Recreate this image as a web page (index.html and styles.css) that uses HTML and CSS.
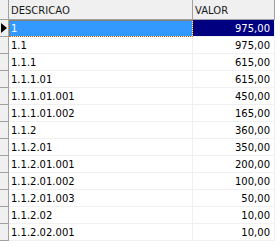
FILE: index.html
```html
<!DOCTYPE html>
<html>
<head>
<meta charset="utf-8">
<link rel="stylesheet" href="styles.css">
</head>
<body>
<div class="grid">
  <div class="row head">
    <div class="ind"></div>
    <div class="desc">DESCRICAO</div>
    <div class="val">VALOR</div>
  </div>
  <div class="row sel">
    <div class="ind"><span class="arrow"></span></div>
    <div class="desc">1</div>
    <div class="val">975,00</div>
  </div>
  <div class="row"><div class="ind"></div><div class="desc">1.1</div><div class="val">975,00</div></div>
  <div class="row"><div class="ind"></div><div class="desc">1.1.1</div><div class="val">615,00</div></div>
  <div class="row"><div class="ind"></div><div class="desc">1.1.1.01</div><div class="val">615,00</div></div>
  <div class="row"><div class="ind"></div><div class="desc">1.1.1.01.001</div><div class="val">450,00</div></div>
  <div class="row"><div class="ind"></div><div class="desc">1.1.1.01.002</div><div class="val">165,00</div></div>
  <div class="row"><div class="ind"></div><div class="desc">1.1.2</div><div class="val">360,00</div></div>
  <div class="row"><div class="ind"></div><div class="desc">1.1.2.01</div><div class="val">350,00</div></div>
  <div class="row"><div class="ind"></div><div class="desc">1.1.2.01.001</div><div class="val">200,00</div></div>
  <div class="row"><div class="ind"></div><div class="desc">1.1.2.01.002</div><div class="val">100,00</div></div>
  <div class="row"><div class="ind"></div><div class="desc">1.1.2.01.003</div><div class="val">50,00</div></div>
  <div class="row"><div class="ind"></div><div class="desc">1.1.2.02</div><div class="val">10,00</div></div>
  <div class="row"><div class="ind"></div><div class="desc">1.1.2.02.001</div><div class="val">10,00</div></div>
</div>
</body>
</html>
```
FILE: styles.css
```css
html, body {
  margin: 0;
  padding: 0;
  background: #ffffff;
}
body {
  font-family: "DejaVu Sans", Tahoma, sans-serif;
  font-size: 10px;
  color: #000000;
}
.grid {
  width: 275px;
}
.row {
  display: flex;
  height: 17px;
}
.row > div {
  box-sizing: border-box;
  height: 17px;
  line-height: 17px;
  white-space: nowrap;
  border-bottom: 1px solid #f0f0f0;
  border-right: 1px solid #f0f0f0;
}
.ind {
  width: 9px;
  background: #f0f0f0;
  position: relative;
}
.row > .ind {
  border-bottom-color: #a0a0a0;
  border-right-color: #a0a0a0;
}
.desc {
  width: 184px;
  padding-left: 2px;
}
.val {
  width: 82px;
  text-align: right;
  padding-right: 4px;
}
.head {
  height: 20px;
}
.head > div {
  height: 20px;
  line-height: 22px;
  background: #f0f0f0;
  color: #1a1a1a;
}
.row.head > div {
  border-bottom-color: #a0a0a0;
  border-right-color: #a0a0a0;
}
.head .val {
  text-align: left;
  padding-left: 2px;
}
.sel .desc {
  background: #3399ff;
  color: #ffffff;
  outline: 1px dotted #cc6600;
  outline-offset: -1px;
}
.sel .val {
  background: #000080;
  color: #ffffff;
}
.arrow {
  position: absolute;
  left: 1px;
  top: 3px;
  width: 0;
  height: 0;
  border-top: 5px solid transparent;
  border-bottom: 5px solid transparent;
  border-left: 6px solid #000000;
}
```
